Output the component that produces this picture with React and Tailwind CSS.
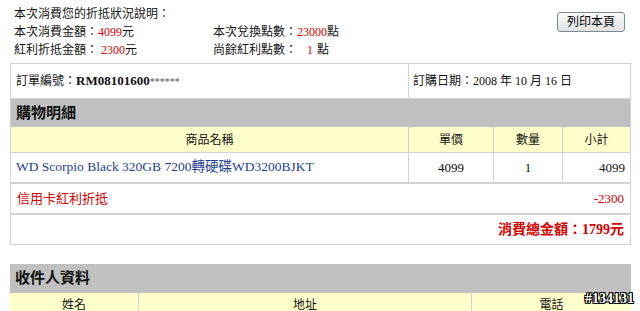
export default function App() {
  const font = { fontFamily: '"Liberation Serif", "Noto Sans CJK TC", serif' };
  const line = "border-[#d2d2d2]";

  return (
    <div
      className="relative w-[640px] h-[311px] overflow-hidden bg-white text-[12px] text-[#111]"
      style={font}
    >
      {/* summary */}
      <div className="flex justify-between pl-[14px] pr-[15px] pt-[5px]">
        <div className="leading-[18px]">
          <div>本次消費您的折抵狀況說明：</div>
          <div className="grid grid-cols-[199px_auto]">
            <div>
              本次消費金額：<span className="text-[#d40000]">4099</span>元
            </div>
            <div>
              本次兌換點數：<span className="text-[#d40000]">23000</span>點
            </div>
            <div>
              紅利折抵金額：<span className="text-[#d40000]"> 2300</span>元
            </div>
            <div>
              尚餘紅利點數：<span className="text-[#d40000] pl-[10px] pr-[4px]">1</span>點
            </div>
          </div>
        </div>
        <button className="mt-[7px] h-[20px] w-[68px] rounded-[3px] border border-[#7a8a99] bg-gradient-to-b from-[#fbfbfb] to-[#e2e2e2] text-[12px] leading-[18px] text-black">
          列印本頁
        </button>
      </div>

      {/* order table */}
      <div className={`mt-[4px] ml-[10px] w-[621px] border ${line}`}>
        <div className={`grid grid-cols-[398px_1fr] h-[35px] border-b ${line}`}>
          <div className={`flex items-center pl-[5px] border-r ${line}`}>
            訂單編號：<b className="text-[13px]">RM08101600</b>
            <span className="text-[10px] text-[#555]">******</span>
          </div>
          <div className="flex items-center pl-[4px]">訂購日期：2008 年 10 月 16 日</div>
        </div>
        <div className="flex items-center h-[28px] pl-[5px] bg-[#c0c0c0] text-[15px] font-bold">
          購物明細
        </div>
        <div className={`grid grid-cols-[398px_85px_69px_1fr] h-[26px] bg-[#ffffcc] border-b ${line}`}>
          <div className={`flex items-center justify-center border-r ${line}`}>商品名稱</div>
          <div className={`flex items-center justify-center border-r ${line}`}>單價</div>
          <div className={`flex items-center justify-center border-r ${line}`}>數量</div>
          <div className="flex items-center justify-center">小計</div>
        </div>
        <div className={`grid grid-cols-[398px_85px_69px_1fr] h-[31px] text-[13px] border-b-2 ${line}`}>
          <div className={`flex items-center pl-[5px] text-[13.5px] text-[#1c3f94] border-r ${line}`}>
            WD Scorpio Black 320GB 7200轉硬碟WD3200BJKT
          </div>
          <div className={`flex items-center justify-center border-r ${line}`}>4099</div>
          <div className={`flex items-center justify-center border-r ${line}`}>1</div>
          <div className="flex items-center justify-end pr-[5px]">4099</div>
        </div>
        <div className={`flex items-center justify-between h-[31px] px-[6px] text-[#d40000] border-b-2 ${line}`}>
          <span className="text-[13px]">信用卡紅利折抵</span>
          <span className="text-[13px]">-2300</span>
        </div>
        <div className="flex items-center justify-end h-[29px] pr-[6px] text-[14px] font-bold text-[#d40000]">
          消費總金額：1799元
        </div>
      </div>

      {/* receiver */}
      <div className="mt-[19px] ml-[10px] w-[621px]">
        <div className="flex items-center h-[29px] pl-[5px] bg-[#c0c0c0] text-[15px] font-bold">
          收件人資料
        </div>
        <div className="grid grid-cols-[129px_333px_1fr] h-[24px] bg-[#ffffcc]">
          <div className={`flex items-center justify-center border-r ${line}`}>姓名</div>
          <div className={`flex items-center justify-center border-r ${line}`}>地址</div>
          <div className="flex items-center justify-center">電話</div>
        </div>
      </div>

      <div className="absolute right-[6px] bottom-[5px] text-[14px] font-bold leading-none text-white [text-shadow:1px_0_0_#000,-1px_0_0_#000,0_1px_0_#000,0_-1px_0_#000,1px_1px_0_#000,-1px_-1px_0_#000,1px_-1px_0_#000,-1px_1px_0_#000]">
        #134131
      </div>
    </div>
  );
}
